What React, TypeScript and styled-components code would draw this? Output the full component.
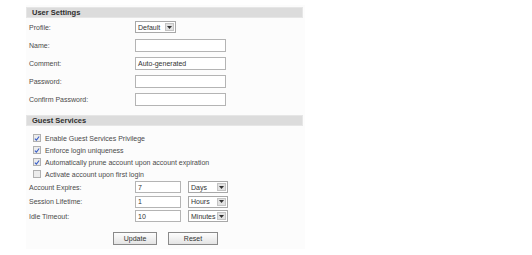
import styled, { createGlobalStyle } from 'styled-components';

const GlobalStyle = createGlobalStyle`
  html, body {
    margin: 0;
    padding: 0;
    background: #ffffff;
  }
  body {
    font-family: "Liberation Sans", Arial, sans-serif;
    font-size: 7px;
    color: #4a4a4a;
  }
`

interface ISelectProps {
  value: string;
  width: number;
  offset?: number;
}

const Select = ({ value, width, offset = 0 }: ISelectProps): JSX.Element => (
  <SelectBox $w={width} $offset={offset}>
    <SelectValue>{value}</SelectValue>
    <SelectArrow>
      <svg width="5" height="3" viewBox="0 0 5 3">
        <path d="M0 0 L5 0 L2.5 3 Z" fill="#333" />
      </svg>
    </SelectArrow>
  </SelectBox>
);

const Check = ({ checked }: { checked: boolean }): JSX.Element => (
  <CheckBox>
    {checked && (
      <svg width="7" height="7" viewBox="0 0 7 7">
        <path d="M1 3.6 L2.8 5.4 L6 1.2" stroke="#3a5fc8" strokeWidth="1.3" fill="none" />
      </svg>
    )}
  </CheckBox>
);

const App = (): JSX.Element => {
  const checks = [
    { label: 'Enable Guest Services Privilege', checked: true },
    { label: 'Enforce login uniqueness', checked: true },
    { label: 'Automatically prune account upon account expiration', checked: true },
    { label: 'Activate account upon first login', checked: false },
  ];
  const timers = [
    { label: 'Account Expires:', value: '7', unit: 'Days' },
    { label: 'Session Lifetime:', value: '1', unit: 'Hours' },
    { label: 'Idle Timeout:', value: '10', unit: 'Minutes' },
  ];

  return (
    <Page>
      <GlobalStyle />
      <Panel>
        <Header>User Settings</Header>
        <Section>
          <Row>
            <Label>Profile:</Label>
            <Select value="Default" width={41} />
          </Row>
          <Row>
            <Label>Name:</Label>
            <TextBox />
          </Row>
          <Row>
            <Label>Comment:</Label>
            <TextBox>Auto-generated</TextBox>
          </Row>
          <Row>
            <Label>Password:</Label>
            <TextBox />
          </Row>
          <Row>
            <Label>Confirm Password:</Label>
            <TextBox />
          </Row>
        </Section>

        <Header $gap>Guest Services</Header>
        <CheckList>
          {checks.map((c) => (
            <CheckRow key={c.label}>
              <Check checked={c.checked} />
              <span>{c.label}</span>
            </CheckRow>
          ))}
        </CheckList>
        <Section>
          {timers.map((t) => (
            <TimerRow key={t.label}>
              <Label>{t.label}</Label>
              <ShortBox>{t.value}</ShortBox>
              <Select value={t.unit} width={40} offset={7} />
            </TimerRow>
          ))}
        </Section>
        <Buttons>
          <Button $w={44}>Update</Button>
          <Button $w={50}>Reset</Button>
        </Buttons>
      </Panel>
    </Page>
  )
};

export default App;

const Page = styled.div`
  width: 532px;
  height: 255px;
  padding: 5px 0 0 26px;
  box-sizing: border-box;
`
const Panel = styled.div`
  width: 279px;
  height: 244px;
  background: #fcfcfc;
  padding-top: 2px;
  box-sizing: border-box;
`
const Header = styled.div<{ $gap?: boolean }>`
  height: 11px;
  margin-top: ${(p) => (p.$gap ? '7px' : '0')};
  width: 277px;
  background: #dcdcdc;
  border: 1px solid #e6e6e6;
  box-sizing: border-box;
  padding-left: 5px;
  display: flex;
  align-items: center;
  font-weight: bold;
  font-size: 7.5px;
  color: #2e2e2e;
`
const Section = styled.div`
  display: flex;
  flex-direction: column;
`
const Row = styled.div`
  height: 18px;
  display: flex;
  align-items: center;
`
const TimerRow = styled.div`
  height: 14.5px;
  display: flex;
  align-items: center;
`
const Label = styled.div`
  width: 109px;
  padding-left: 3px;
  box-sizing: border-box;
`
const TextBox = styled.div`
  width: 91px;
  height: 13px;
  border: 1px solid #b4b4b4;
  background: #ffffff;
  box-sizing: border-box;
  padding-left: 2px;
  display: flex;
  align-items: center;
  color: #333;
`
const ShortBox = styled(TextBox)`
  width: 46px;
  height: 12px;
`
const SelectBox = styled.div<{ $w: number; $offset: number }>`
  width: ${(p) => p.$w}px;
  height: 12px;
  margin-left: ${(p) => p.$offset}px;
  border: 1px solid #a8a8a8;
  background: #ffffff;
  box-sizing: border-box;
  display: flex;
  align-items: center;
  justify-content: space-between;
  padding: 0 1px 0 2px;
  color: #333;
`
const SelectValue = styled.span`
  white-space: nowrap;
`
const SelectArrow = styled.div`
  width: 9px;
  height: 8px;
  background: #e2e2e2;
  border: 1px solid #c4c4c4;
  box-sizing: border-box;
  display: flex;
  align-items: center;
  justify-content: center;
`
const CheckList = styled.div`
  display: flex;
  flex-direction: column;
  padding: 6px 0 0 7px;
`
const CheckRow = styled.div`
  height: 12px;
  display: flex;
  align-items: center;
  gap: 4px;
`
const CheckBox = styled.div`
  width: 8px;
  height: 8px;
  border: 1px solid #b0b0b0;
  background: #ececec;
  box-sizing: border-box;
  display: flex;
  align-items: center;
  justify-content: center;
`
const Buttons = styled.div`
  display: flex;
  justify-content: center;
  gap: 11px;
  margin-top: 8px;
`
const Button = styled.div<{ $w: number }>`
  width: ${(p) => p.$w}px;
  height: 13px;
  border: 1px solid #8a8a8a;
  background: linear-gradient(#fdfdfd, #e4e4e4);
  box-sizing: border-box;
  display: flex;
  align-items: center;
  justify-content: center;
  color: #333;
`
